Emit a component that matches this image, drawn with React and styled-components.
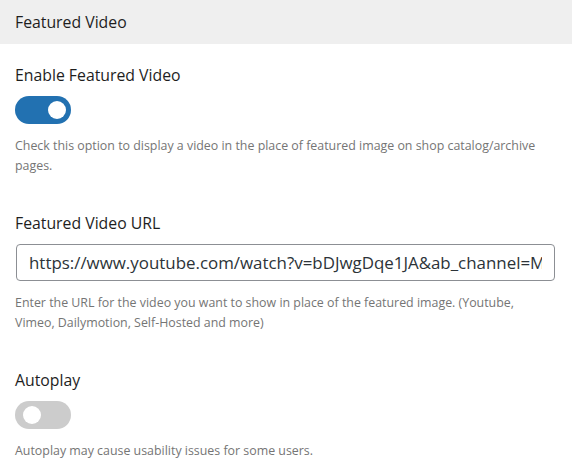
import React, {useState} from 'react'
import styled, {createGlobalStyle} from 'styled-components'

const GlobalStyle = createGlobalStyle`
  body {
    margin: 0;
    background: #fff;
    font-family: "Open Sans", "Noto Sans", sans-serif;
  }
`;

const Panel = styled.div`
  width: 572px;
  padding-bottom: 20px;
`;

const PanelHeader = styled.div`
  height: 44px;
  display: flex;
  align-items: center;
  padding: 0 15px;
  background: #efefef;
  font-size: 15.8px;
  color: #1e1e1e;
`;

const PanelBody = styled.div`
  padding: 21px 18px 0 15px;
`;

const Field = styled.div`
  & + & {
    margin-top: 37px;
  }
`;

const Label = styled.div`
  font-size: 15.8px;
  line-height: 20px;
  color: #1e1e1e;
  margin-bottom: 11px;
`;

const Help = styled.p`
  margin: 12px 0 0;
  font-size: 12.4px;
  line-height: 20px;
  color: #757575;
`;

const Toggle = styled.button`
  position: relative;
  display: block;
  width: 56px;
  height: 28px;
  padding: 0;
  border: none;
  border-radius: 14px;
  background: ${p => (p.$on ? '#2271b1' : '#cccccc')};
  cursor: pointer;

  &::after {
    content: '';
    position: absolute;
    top: 5px;
    left: ${p => (p.$on ? '33px' : '8px')};
    width: 18px;
    height: 18px;
    border-radius: 50%;
    background: #fff;
  }
`;

const UrlInput = styled.input`
  display: block;
  box-sizing: border-box;
  width: 539px;
  height: 37px;
  margin-left: 1px;
  padding: 0 12px;
  border: 1px solid #8c8f94;
  border-radius: 4px;
  font-family: inherit;
  font-size: 16.9px;
  color: #2c3338;
  outline: none;
`;

export default function App() {
    const [featured, setFeatured] = useState(true)
    const [autoplay, setAutoplay] = useState(false)
    const [url, setUrl] = useState('https://www.youtube.com/watch?v=bDJwgDqe1JA&ab_channel=Mikey')

    return (
        <Panel>
            <GlobalStyle/>
            <PanelHeader>Featured Video</PanelHeader>
            <PanelBody>
                <Field>
                    <Label>Enable Featured Video</Label>
                    <Toggle $on={featured} onClick={() => setFeatured(!featured)} aria-label="Enable Featured Video"/>
                    <Help>Check this option to display a video in the place of featured image on shop catalog/archive pages.</Help>
                </Field>
                <Field>
                    <Label>Featured Video URL</Label>
                    <UrlInput value={url} onChange={e => setUrl(e.target.value)}/>
                    <Help>Enter the URL for the video you want to show in place of the featured image. (Youtube, Vimeo, Dailymotion, Self-Hosted and more)</Help>
                </Field>
                <Field>
                    <Label>Autoplay</Label>
                    <Toggle $on={autoplay} onClick={() => setAutoplay(!autoplay)} aria-label="Autoplay"/>
                    <Help>Autoplay may cause usability issues for some users.</Help>
                </Field>
            </PanelBody>
        </Panel>
    )
}
